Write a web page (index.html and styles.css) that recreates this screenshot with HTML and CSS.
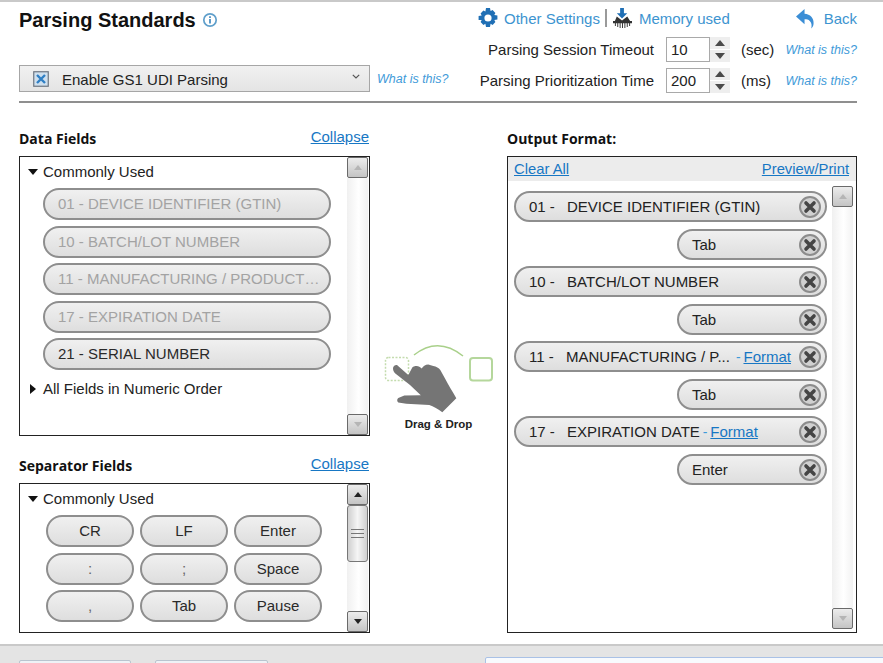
FILE: index.html
```html
<!DOCTYPE html>
<html lang="en">
<head>
<meta charset="utf-8">
<title>Parsing Standards</title>
<link rel="stylesheet" href="styles.css">
</head>
<body>
<svg class="defs" width="0" height="0" aria-hidden="true">
  <symbol id="x" viewBox="0 0 22 22">
    <circle cx="11" cy="11" r="10" fill="#d0d0d0" stroke="#8c8c8c" stroke-width="2"/>
    <path d="M7 7l8 8M15 7l-8 8" stroke="#454545" stroke-width="3.6" stroke-linecap="round"/>
  </symbol>
</svg>
<div class="app">
  <main class="panel">
    <header class="head">
      <div class="head-left">
        <h1 class="title">Parsing Standards
          <svg class="info" viewBox="0 0 16 16"><circle cx="8" cy="8" r="6.200" fill="none" stroke="#5f9fcb" stroke-width="1.700"/><path d="M8 7v4.600M8 4.200v1.700" stroke="#4b90c2" stroke-width="1.800"/></svg>
        </h1>
        <div class="enable-row">
          <div class="select">
            <svg class="check" viewBox="0 0 16 16"><rect x=".75" y=".75" width="14.500" height="14.500" fill="#cfe0ef" stroke="#6d7681" stroke-width="1.200"/><path d="M4 4l8 8M12 4l-8 8" stroke="#2f7fc4" stroke-width="2.400"/></svg>
            <span class="select-text">Enable GS1 UDI Parsing</span>
            <svg class="chev" viewBox="0 0 8 5"><path d="M.8 .8L4 4l3.200-3.200" fill="none" stroke="#555" stroke-width="1.200"/></svg>
          </div>
          <a class="what">What is this?</a>
        </div>
      </div>
      <div class="head-right">
        <nav class="nav">
          <a class="nav-link">
            <svg class="gear" viewBox="1 1 20 20"><path fill="#1f6fb5" fill-rule="evenodd" d="M9 1h4l.6 3 2-.9 2.800 2.800-1.100 2 3.100.6v4l-3.100.6 1.100 2-2.800 2.800-2-1.100-.6 3.100H9l-.6-3.100-2 1.100-2.800-2.800 1.100-2L1.600 13V9l3.100-.6-1.100-2L6.400 3.600l2 .9zM11 7.400a3.600 3.600 0 1 0 0 7.200 3.600 3.600 0 0 0 0-7.200z"/></svg>
            Other Settings</a>
          <span class="nav-sep"></span>
          <a class="nav-link mem">
            <svg class="chip" viewBox="0 0 20 22"><path fill="#1f6fb5" d="M7.500 0h4v5.500H15L9.500 11 4 5.500h3.500z"/><path fill="#333" d="M4 9l5.500 4L15 9l3 4.500h2V16h-2v3h-1v-3h-1.500v4h-1v-4H13v5h-1v-5h-1.500v5h-1v-5H8v5H7v-5H5.500v4h-1v-4H3v3H2v-3H0v-2.500h2z"/></svg>
            Memory used</a>
          <a class="nav-link back">
            <svg class="back-icon" viewBox="0 0 20 22"><path fill="#3b8ed6" d="M9 1v5c6 .5 10 4.500 9.500 10.500-.2 2-1 3.800-2.500 5 .8-3.500.5-6-1.500-8-1.300-1.300-3.200-1.700-5.500-1.700V17L0 9z"/></svg>
            Back</a>
        </nav>
        <div class="setting">
          <span class="setting-label">Parsing Session Timeout</span>
          <span class="num">10</span>
          <span class="spin"><span class="spin-b"><i class="up"></i></span><span class="spin-b"><i class="dn"></i></span></span>
          <span class="unit">(sec)</span>
          <a class="what">What is this?</a>
        </div>
        <div class="setting">
          <span class="setting-label">Parsing Prioritization Time</span>
          <span class="num">200</span>
          <span class="spin"><span class="spin-b"><i class="up"></i></span><span class="spin-b"><i class="dn"></i></span></span>
          <span class="unit">(ms)</span>
          <a class="what">What is this?</a>
        </div>
      </div>
    </header>

    <div class="cols">
      <section class="col-left">
        <div class="label-row"><h2 class="label">Data Fields</h2><a class="link">Collapse</a></div>
        <div class="box data-box">
          <div class="box-body">
            <div class="tree"><i class="tri-down"></i>Commonly Used</div>
            <div class="field-list">
              <div class="pill off">01 - DEVICE IDENTIFIER (GTIN)</div>
              <div class="pill off">10 - BATCH/LOT NUMBER</div>
              <div class="pill off">11 - MANUFACTURING / PRODUCT…</div>
              <div class="pill off">17 - EXPIRATION DATE</div>
              <div class="pill">21 - SERIAL NUMBER</div>
            </div>
            <div class="tree tree-2"><i class="tri-right"></i>All Fields in Numeric Order</div>
          </div>
          <div class="sb">
            <span class="sb-btn dim"><i class="up"></i></span>
            <span class="sb-track"></span>
            <span class="sb-btn dim"><i class="dn"></i></span>
          </div>
        </div>
        <div class="label-row sep-label"><h2 class="label">Separator Fields</h2><a class="link">Collapse</a></div>
        <div class="box sep-box">
          <div class="box-body">
            <div class="tree"><i class="tri-down"></i>Commonly Used</div>
            <div class="sep-grid">
              <div class="pill center">CR</div>
              <div class="pill center">LF</div>
              <div class="pill center">Enter</div>
              <div class="pill center punct">:</div>
              <div class="pill center punct">;</div>
              <div class="pill center">Space</div>
              <div class="pill center punct">,</div>
              <div class="pill center">Tab</div>
              <div class="pill center">Pause</div>
            </div>
          </div>
          <div class="sb">
            <span class="sb-btn"><i class="up dark"></i></span>
            <span class="sb-thumb"><b></b><b></b><b></b></span>
            <span class="sb-track"></span>
            <span class="sb-btn"><i class="dn dark"></i></span>
          </div>
        </div>
      </section>

      <section class="col-mid">
        <svg class="dd" viewBox="384 343 110 72">
          <rect x="385.500" y="357.500" width="23" height="23" rx="3" fill="none" stroke="#c4dcae" stroke-width="1.500" stroke-dasharray="2 1.500"/>
          <path d="M414 355Q438 336 463 356" fill="none" stroke="#a9d08a" stroke-width="1.500"/>
          <rect x="470" y="358" width="22" height="22.500" rx="3" fill="none" stroke="#b5d79c" stroke-width="2"/>
          <path fill="#757575" d="M393 368c.5-2.500 2.500-3.500 4-3l11.300 10 4-7.500c1.500-1.500 5-2 7.500-.5l2 1.500c1-2 3.500-4 6.500-4l5 1.500c3 .5 5.500 2 7 4l5 9c3 6 7 12 11 19.300l-14 14c-4-3-9-6-13-7.300l-23-1.300-8-1.300c-1.500-1-1.500-3.500 0-4.500l6-2.300 16.500-.3L410 385l-15-11.700c-1.500-1.500-2-3.300-2-5.300z"/>
        </svg>
        <div class="dd-text">Drag &amp; Drop</div>
      </section>

      <section class="col-right">
        <div class="label-row"><h2 class="label">Output Format:</h2></div>
        <div class="box out-box">
          <div class="out-bar"><a class="link">Clear All</a><a class="link">Preview/Print</a></div>
          <div class="out-body">
            <div class="out-list">
              <div class="opill"><span class="num-col">01 -</span><span class="otext">DEVICE IDENTIFIER (GTIN)</span><svg class="xi"><use href="#x"/></svg></div>
              <div class="opill short"><span class="otext">Tab</span><svg class="xi"><use href="#x"/></svg></div>
              <div class="opill"><span class="num-col">10 -</span><span class="otext">BATCH/LOT NUMBER</span><svg class="xi"><use href="#x"/></svg></div>
              <div class="opill short"><span class="otext">Tab</span><svg class="xi"><use href="#x"/></svg></div>
              <div class="opill"><span class="num-col tight">11 -</span><span class="otext">MANUFACTURING / P...</span><span class="fmt far">- <a class="link">Format</a></span><svg class="xi"><use href="#x"/></svg></div>
              <div class="opill short"><span class="otext">Tab</span><svg class="xi"><use href="#x"/></svg></div>
              <div class="opill"><span class="num-col">17 -</span><span class="otext">EXPIRATION DATE</span><span class="fmt">- <a class="link">Format</a></span><svg class="xi"><use href="#x"/></svg></div>
              <div class="opill short"><span class="otext">Enter</span><svg class="xi"><use href="#x"/></svg></div>
            </div>
            <div class="sb out-sb">
              <span class="sb-btn dim"><i class="up"></i></span>
              <span class="sb-track"></span>
              <span class="sb-btn dim"><i class="dn"></i></span>
            </div>
          </div>
        </div>
      </section>
    </div>
  </main>
  <footer class="foot">
    <span class="foot-btn"></span>
    <span class="foot-btn second"></span>
    <span class="foot-panel"></span>
  </footer>
</div>
</body>
</html>
```

FILE: styles.css
```css
* { box-sizing: border-box; }
html, body { margin: 0; padding: 0; background: #fff; }
body { width: 883px; height: 663px; overflow: hidden; font-family: "Liberation Sans", Arial, sans-serif; color: #1a1a1a; }
.defs { display: block; height: 0; }
.app { width: 883px; height: 663px; display: flex; flex-direction: column; overflow: hidden; }

.panel { height: 646px; flex: none; border-top: 2px solid #c9c9c9; border-bottom: 2px solid #c9c9c9; padding: 0 26px 0 19px; background: #fff; }

.head { height: 101px; border-bottom: 2px solid #8f8f8f; display: flex; justify-content: space-between; }
.head-left { width: 430px; }
.title { margin: 6px 0 0; font-size: 20px; line-height: 24px; font-weight: 700; color: #111; display: flex; align-items: center; gap: 6px; }
.info { width: 16px; height: 16px; }
.enable-row { margin-top: 33px; display: flex; align-items: center; gap: 7px; }
.select { width: 351px; height: 27px; border: 1px solid #a6a6a6; background: linear-gradient(#f1f1f1, #e4e4e4); display: flex; align-items: center; padding: 0 9px 0 13px; font-size: 15px; color: #222; }
.check { width: 16px; height: 16px; flex: none; }
.select-text { margin-left: 13px; flex: 1; position: relative; top: 1px; }
.chev { width: 8px; height: 5px; margin-bottom: 4px; }
.what { font-size: 12.500px; font-style: italic; color: #3f9bd9; white-space: nowrap; }

.head-right { width: 400px; display: flex; flex-direction: column; align-items: flex-end; }
.nav { height: 32px; width: 100%; display: flex; align-items: center; color: #3f9bd9; padding: 0 0 0 21px; }
.nav-link { display: flex; align-items: center; font-size: 15px; color: #3d94d0; white-space: nowrap; }
.gear { width: 20px; height: 20px; margin-right: 6px; flex: none; }
.nav-sep { width: 2px; height: 18px; background: #9a9a9a; margin: 0 6px 0 5px; }
.chip { width: 19px; height: 21px; margin-right: 7px; flex: none; }
.back { margin-left: auto; }
.back-icon { width: 19px; height: 21px; margin-right: 9px; flex: none; }

.setting { height: 31px; width: 100%; display: flex; align-items: center; font-size: 15px; color: #222; }
.setting-label { width: 197px; flex: none; text-align: right; white-space: nowrap; }
.num { width: 44px; height: 25px; flex: none; margin-left: 12px; border: 1px solid #a9a9a9; padding-left: 4px; line-height: 24px; font-size: 15px; background: #fff; }
.spin { width: 20px; height: 25px; flex: none; display: flex; flex-direction: column; gap: 1px; }
.spin-b { flex: 1; background: #eee; display: flex; align-items: center; justify-content: center; }
.unit { width: 44px; flex: none; margin-left: 11px; }
.what { margin-left: auto; }
.enable-row .what { margin-left: 0; }

.up, .dn { display: block; width: 0; height: 0; border-left: 5px solid transparent; border-right: 5px solid transparent; }
.up { border-bottom: 6px solid #4a4a4a; }
.dn { border-top: 6px solid #4a4a4a; }

.cols { display: flex; justify-content: space-between; width: 838px; }
.col-left { width: 351px; flex: none; }
.col-right { width: 350px; flex: none; }
.col-mid { flex: 1; display: flex; flex-direction: column; align-items: center; padding-top: 240px; }
.dd { width: 110px; height: 72px; flex: none; }
.dd-text { margin-top: 2px; font-size: 11.500px; font-weight: 700; line-height: 14px; color: #222; }

.label-row { height: 53px; display: flex; justify-content: space-between; align-items: flex-end; padding-bottom: 8px; }
.sep-label { height: 47px; }
.label { margin: 0; font-family: "Open Sans", sans-serif; font-size: 14px; font-weight: 700; line-height: 19px; color: #111; }
.link { font-size: 15px; color: #1777c4; text-decoration: underline; line-height: 20px; position: relative; top: -1px; }
.col-left .link { right: 1px; }

.box { border: 1px solid #222; display: flex; background: #fff; overflow: hidden; }
.data-box { height: 280px; }
.sep-box { height: 150px; }
.out-box { height: 477px; flex-direction: column; }
.box-body { flex: 1; padding: 6px 0 0 8px; min-width: 0; }

.tree { display: flex; align-items: center; font-size: 15px; line-height: 18px; color: #222; }
.tri-down { width: 0; height: 0; border-left: 5px solid transparent; border-right: 5px solid transparent; border-top: 6px solid #111; margin-right: 5px; }
.tri-right { width: 0; height: 0; border-top: 5px solid transparent; border-bottom: 5px solid transparent; border-left: 6px solid #111; margin: 0 7px 0 2px; }
.tree-2 { margin-top: 10px; }

.field-list { margin: 7px 0 0 15px; width: 288px; display: flex; flex-direction: column; gap: 5.500px; }
.pill { height: 32px; border: 2px solid #8e8e8e; border-radius: 16px; background: linear-gradient(#f0f0f0, #dedede); display: flex; align-items: center; padding: 0 0 1px 13px; font-size: 15px; color: #2a2a2a; white-space: nowrap; overflow: hidden; }
.pill.off { color: #a3a3a3; }
.pill.center { justify-content: center; padding: 0 0 1px; }
.pill.punct { color: #666; }

.sep-grid { margin: 7px 0 0 18px; width: 276px; display: grid; grid-template-columns: repeat(3, 88px); column-gap: 6px; row-gap: 5.500px; }

.sb { width: 22px; flex: none; display: flex; flex-direction: column; padding-right: 1px; background: #fff; }
.sb-btn { height: 21px; flex: none; border: 1px solid #6a6a6a; border-radius: 2px; background: linear-gradient(#ececec, #c4c4c4); display: flex; align-items: center; justify-content: center; }
.sb-btn .up { border-width: 0 4.500px 5px; border-bottom-color: #b5b5b5; border-left-color: transparent; border-right-color: transparent; border-style: solid; }
.sb-btn .dn { border-width: 5px 4.500px 0; border-top-color: #b5b5b5; border-left-color: transparent; border-right-color: transparent; border-style: solid; }
.sb-btn .up.dark { border-bottom-color: #222; }
.sb-btn .dn.dark { border-top-color: #222; }
.sb-track { flex: 1; background: linear-gradient(90deg, #f0f0f0, #fff 55%, #f2f2f2); }
.sb-thumb { height: 57px; flex: none; border: 1px solid #777; border-radius: 3px; background: linear-gradient(90deg, #cfcfcf, #f5f5f5 50%, #cfcfcf); display: flex; flex-direction: column; align-items: center; justify-content: center; gap: 3px; }
.sb-thumb b { display: block; width: 13px; height: 1px; background: #777; }

.out-bar { height: 24px; flex: none; background: #ececec; display: flex; justify-content: space-between; align-items: center; padding: 0 7px 0 6px; }
.out-bar .link { top: 0; font-size: 14.800px; }
.out-body { flex: 1; display: flex; min-height: 0; }
.out-list { width: 313px; margin: 10px 0 0 6px; display: flex; flex-direction: column; align-items: flex-end; gap: 6px; flex: none; }
.opill { width: 313px; height: 31px; border: 2px solid #8e8e8e; border-radius: 16px; background: linear-gradient(#f0f0f0, #dedede); display: flex; align-items: center; padding: 0 4px 0 13px; font-size: 15px; color: #222; white-space: nowrap; }
.opill.short { width: 150px; margin-top: 1px; }
.num-col { width: 38px; flex: none; }
.num-col.tight { width: 37px; }
.short .otext { flex: 1; }
.fmt { margin-left: 3px; color: #3f9bd9; font-size: 14px; word-spacing: -1px; }
.fmt.far { margin-left: 6px; }
.fmt .link { top: 0; }
.xi { width: 22px; height: 22px; margin-left: auto; flex: none; }
.out-sb { height: 443px; width: 21px; margin: 5px 0 0 5px; padding: 0; }

.foot { flex: 1; background: #e4e4e4; display: flex; padding: 14px 0 0 19px; }
.foot-btn { width: 112px; height: 20px; border: 1px solid #b9c4cf; border-radius: 2px; background: #eef2f6; flex: none; }
.foot-btn.second { width: 113px; margin-left: 24px; }
.foot-panel { width: 400px; height: 20px; margin: -3px 0 0 217px; border: 1px solid #a9c1e6; border-radius: 2px; background: #f8fafd; flex: none; }
```
